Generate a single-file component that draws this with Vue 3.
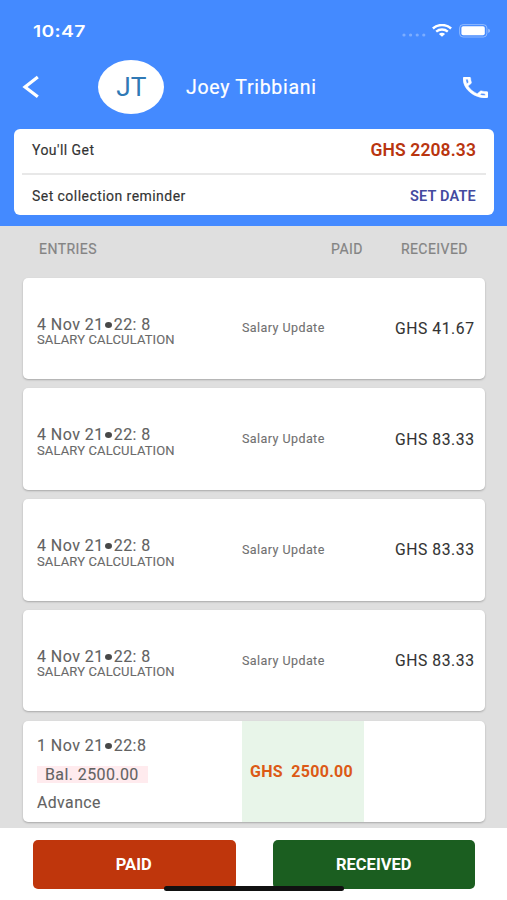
<script setup>
const entries = [
  { id: 1, amount: 'GHS 41.67' },
  { id: 2, amount: 'GHS 83.33' },
  { id: 3, amount: 'GHS 83.33' },
  { id: 4, amount: 'GHS 83.33' },
]
</script>

<template>
  <div class="screen">
    <header class="header">
      <div class="status">
        <span class="time">10:47</span>
        <div class="indicators">
          <svg class="signal" width="24" height="4" viewBox="0 0 24 4" fill="#fff" opacity=".3">
            <circle cx="2" cy="2" r="1.6" /><circle cx="8.6" cy="2" r="1.6" /><circle cx="15.2" cy="2" r="1.6" /><circle cx="21.8" cy="2" r="1.6" />
          </svg>
          <svg class="wifi" width="20" height="13" viewBox="0 0 20 13" fill="none" stroke="#fff">
            <path d="M.9 4.5C6-.1 14-.1 19.1 4.5" stroke-width="2.5" />
            <path d="M4.2 7.7c3.4-2.9 8.2-2.9 11.6 0" stroke-width="2.4" />
            <path d="M6.9 9.9c1.8-1.5 4.4-1.5 6.2 0L10 12.7z" fill="#fff" stroke="none" />
          </svg>
          <svg width="32" height="14" viewBox="0 0 32 14" fill="none">
            <rect x=".6" y=".6" width="27.3" height="12.4" rx="3.5" stroke="#fff" stroke-opacity=".4" />
            <rect x="2.4" y="2.3" width="23.4" height="9" rx="1.8" fill="#fff" />
            <path d="M29.3 4.8c2.1.7 2.1 3.4 0 4.1z" fill="#fff" fill-opacity=".5" />
          </svg>
        </div>
      </div>
      <div class="nav">
        <svg class="back" width="18" height="24" viewBox="0 0 18 24" fill="none" stroke="#fff" stroke-width="3.2">
          <path d="M15.8 1.9 3 12l12.8 9.7" />
        </svg>
        <div class="avatar"><span>JT</span></div>
        <span class="name">Joey Tribbiani</span>
        <svg class="phone" width="25" height="21" viewBox="3 3 18 18" preserveAspectRatio="none" fill="#fff" stroke="#fff" stroke-width=".35">
          <path d="M6.54 5c.06.89.21 1.76.45 2.59l-1.2 1.2c-.41-1.2-.67-2.47-.76-3.79h1.51m9.86 12.02c.85.24 1.72.39 2.6.45v1.49c-1.32-.09-2.59-.35-3.8-.75l1.2-1.19M7.5 3H4c-.55 0-1 .45-1 1 0 9.39 7.61 17 17 17 .55 0 1-.45 1-1v-3.49c0-.55-.45-1-1-1-1.24 0-2.45-.2-3.57-.57a.84.84 0 0 0-.31-.05c-.26 0-.51.1-.71.29l-2.2 2.2a15.15 15.15 0 0 1-6.59-6.59l2.2-2.2c.28-.28.36-.67.25-1.02A11.36 11.36 0 0 1 8.5 4c0-.55-.45-1-1-1z" />
        </svg>
      </div>
      <section class="summary">
        <div class="summary-row">
          <span class="label get">You'll Get</span>
          <span class="total">GHS 2208.33</span>
        </div>
        <div class="summary-row reminder">
          <span class="label">Set collection reminder</span>
          <span class="set-date">SET DATE</span>
        </div>
      </section>
    </header>

    <main class="content">
      <div class="columns">
        <span class="col-entries">ENTRIES</span>
        <span class="col-paid">PAID</span>
        <span class="col-received">RECEIVED</span>
      </div>
      <div class="list">
        <article v-for="entry in entries" :key="entry.id" class="card">
          <div class="details">
            <div class="date">4 Nov 21<i class="dot"></i>22: 8</div>
            <div class="kind">SALARY CALCULATION</div>
          </div>
          <div class="update"><span>Salary Update</span></div>
          <div class="amount"><span>{{ entry.amount }}</span></div>
        </article>
        <article class="card">
          <div class="details advance">
            <div class="date">1 Nov 21<i class="dot"></i>22:8</div>
            <div class="balance">Bal. 2500.00</div>
            <div class="note">Advance</div>
          </div>
          <div class="paid-cell"><span>GHS&nbsp; 2500.00</span></div>
        </article>
      </div>
    </main>

    <footer class="footer">
      <button class="btn paid"><span>PAID</span></button>
      <button class="btn received"><span>RECEIVED</span></button>
      <div class="home"></div>
    </footer>
  </div>
</template>

<style>
body { margin: 0; }
</style>

<style scoped>
.screen { width: 507px; height: 900px; overflow: hidden; display: flex; flex-direction: column; background: #dfdfdf; font-family: Roboto, "Liberation Sans", sans-serif; color: #333; white-space: nowrap; }
.screen * { box-sizing: border-box; }
.header { height: 226px; flex: none; background: #448aff; color: #fff; }
.status { height: 60px; padding: 1px 16px 0 33px; display: flex; justify-content: space-between; align-items: center; }
.time { font: 600 16.5px/20px Inter, sans-serif; letter-spacing: 0.3px; transform: scaleX(1.17); transform-origin: left; }
.indicators { display: flex; align-items: center; }
.signal { margin: 8px 6px 0 0; }
.wifi { margin-right: 7px; }
.nav { height: 54px; display: flex; align-items: center; padding: 0 19.5px 0 22px; }
.back { margin-right: 58px; }
.avatar { width: 66px; height: 54px; border-radius: 50%; background: #fff; color: #3079b5; font-size: 25px; display: flex; align-items: center; justify-content: center; }
.avatar span { transform: scaleX(1.05); }
.name { margin-left: 22px; font-size: 19.5px; letter-spacing: 0.7px; -webkit-text-stroke: 0.2px #fff; }
.phone { margin-left: auto; }
.summary { margin: 15px 13px 0 14px; height: 86px; border-radius: 6px; background: #fff; color: #333; padding: 0 8px; }
.summary-row { display: flex; justify-content: space-between; align-items: center; height: 44px; padding: 0 10px; }
.summary-row.reminder { border-top: 2px solid #e8e8e8; height: 42px; padding-top: 2px; }
.label { font-size: 14px; letter-spacing: 0.45px; -webkit-text-stroke: 0.15px #333; }
.get { padding-bottom: 3px; }
.total { font-size: 17.5px; font-weight: 600; color: #b9350f; letter-spacing: 0.1px; padding-bottom: 3px; }
.set-date { font-size: 14.5px; font-weight: 600; color: #444aa0; letter-spacing: 0.2px; }
.content { height: 602px; flex: none; overflow: hidden; }
.columns { display: flex; height: 51.5px; padding: 0 39px 6px; align-items: center; color: #848484; font-size: 14px; letter-spacing: 0.45px; -webkit-text-stroke: 0.2px #848484; }
.col-paid { margin-left: auto; margin-right: 38px; }
.list { display: flex; flex-direction: column; gap: 9.25px; padding: 0 22px 0 23px; }
.card { height: 101.5px; flex: none; background: #fff; border-radius: 5px; box-shadow: 0 1px 2px rgba(0,0,0,.25); display: grid; grid-template-columns: 219px 122px 1fr; overflow: hidden; }
.details { padding: 38px 0 0 14px; color: #626262; }
.date { font-size: 16px; line-height: 18px; letter-spacing: 0.45px; display: flex; align-items: center; -webkit-text-stroke: 0.1px #626262; }
.dot { width: 7px; height: 6px; border-radius: 50%; background: #484848; margin: 0 2px 0 1px; }
.kind { font-size: 13px; line-height: 13px; margin-top: -0.5px; letter-spacing: 0.14px; color: #6a6a6a; -webkit-text-stroke: 0.1px #6a6a6a; }
.update { display: flex; align-items: center; font-size: 12.5px; letter-spacing: 0.43px; color: #707070; -webkit-text-stroke: 0.1px #707070; }
.update span { margin-top: -1px; }
.amount { display: flex; align-items: center; justify-content: flex-end; padding-right: 10.5px; font-size: 15.7px; letter-spacing: 0.55px; color: #333; -webkit-text-stroke: 0.1px #333; }
.advance { padding-top: 16px; }
.balance { width: 111px; height: 17px; margin-top: 11.5px; padding-left: 8px; background: #ffebee; font-size: 16px; line-height: 17px; letter-spacing: 0.4px; -webkit-text-stroke: 0.1px #626262; }
.note { font-size: 15.8px; line-height: 18px; margin-top: 11px; letter-spacing: 0.45px; -webkit-text-stroke: 0.1px #626262; }
.paid-cell { background: #e8f5e9; color: #dc5a16; display: flex; align-items: center; padding-left: 8px; font-size: 16px; font-weight: 700; letter-spacing: 0.27px; }
.footer { position: relative; height: 72px; background: #fff; padding: 12px 32px 0 33px; display: flex; justify-content: space-between; }
.btn { width: 202.5px; height: 49px; border: 0; border-radius: 5px; color: #fff; font: 700 16.5px Roboto, sans-serif; padding: 0; }
.paid { background: #bf360c; padding-right: 1px; }
.received { background: #1b5e20; }
.home { position: absolute; left: 164px; top: 58px; width: 180px; height: 5px; border-radius: 3px; background: #111; }
</style>
